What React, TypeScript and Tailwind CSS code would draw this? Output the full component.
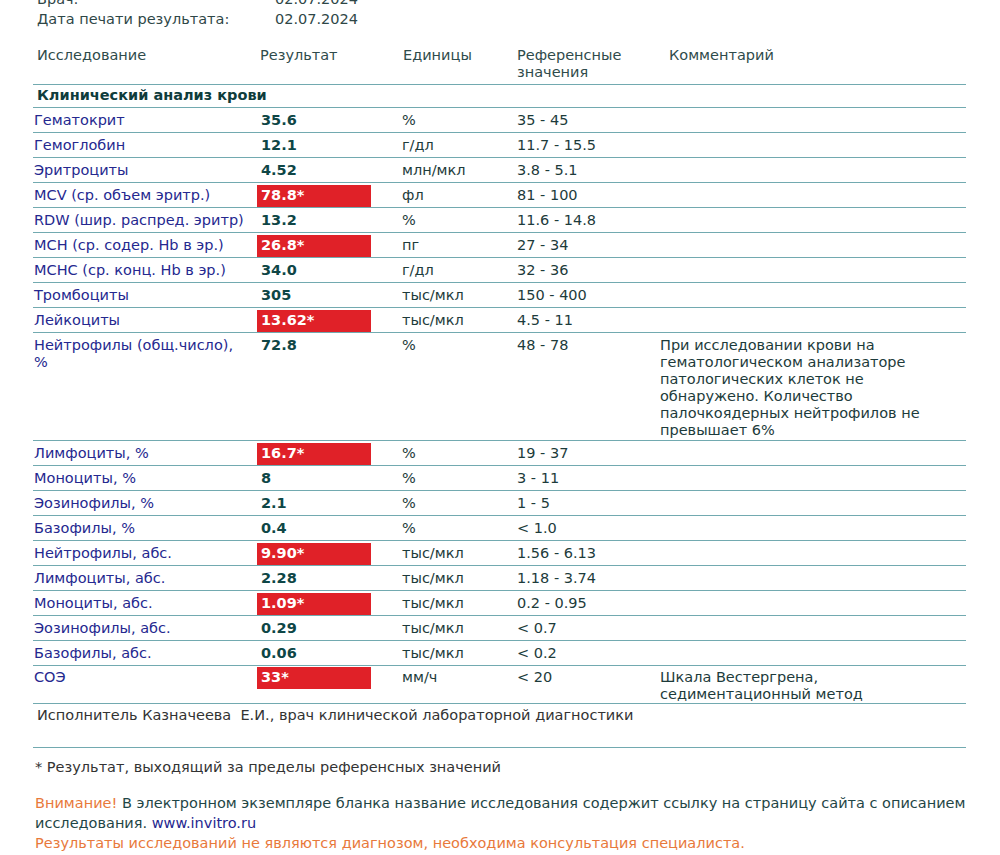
import React from 'react';

type Row = {
  name: string;
  value: string;
  bad?: boolean;
  unit: string;
  ref: string;
  comment?: string;
};

const rows: Row[] = [
  { name: 'Гематокрит', value: '35.6', unit: '%', ref: '35 - 45' },
  { name: 'Гемоглобин', value: '12.1', unit: 'г/дл', ref: '11.7 - 15.5' },
  { name: 'Эритроциты', value: '4.52', unit: 'млн/мкл', ref: '3.8 - 5.1' },
  { name: 'MCV (ср. объем эритр.)', value: '78.8*', bad: true, unit: 'фл', ref: '81 - 100' },
  { name: 'RDW (шир. распред. эритр)', value: '13.2', unit: '%', ref: '11.6 - 14.8' },
  { name: 'MCH (ср. содер. Hb в эр.)', value: '26.8*', bad: true, unit: 'пг', ref: '27 - 34' },
  { name: 'MCHC (ср. конц. Hb в эр.)', value: '34.0', unit: 'г/дл', ref: '32 - 36' },
  { name: 'Тромбоциты', value: '305', unit: 'тыс/мкл', ref: '150 - 400' },
  { name: 'Лейкоциты', value: '13.62*', bad: true, unit: 'тыс/мкл', ref: '4.5 - 11' },
  {
    name: 'Нейтрофилы (общ.число), %',
    value: '72.8',
    unit: '%',
    ref: '48 - 78',
    comment:
      'При исследовании крови на гематологическом анализаторе патологических клеток не обнаружено. Количество палочкоядерных нейтрофилов не превышает 6%',
  },
  { name: 'Лимфоциты, %', value: '16.7*', bad: true, unit: '%', ref: '19 - 37' },
  { name: 'Моноциты, %', value: '8', unit: '%', ref: '3 - 11' },
  { name: 'Эозинофилы, %', value: '2.1', unit: '%', ref: '1 - 5' },
  { name: 'Базофилы, %', value: '0.4', unit: '%', ref: '< 1.0' },
  { name: 'Нейтрофилы, абс.', value: '9.90*', bad: true, unit: 'тыс/мкл', ref: '1.56 - 6.13' },
  { name: 'Лимфоциты, абс.', value: '2.28', unit: 'тыс/мкл', ref: '1.18 - 3.74' },
  { name: 'Моноциты, абс.', value: '1.09*', bad: true, unit: 'тыс/мкл', ref: '0.2 - 0.95' },
  { name: 'Эозинофилы, абс.', value: '0.29', unit: 'тыс/мкл', ref: '< 0.7' },
  { name: 'Базофилы, абс.', value: '0.06', unit: 'тыс/мкл', ref: '< 0.2' },
  {
    name: 'СОЭ',
    value: '33*',
    bad: true,
    unit: 'мм/ч',
    ref: '< 20',
    comment: 'Шкала Вестергрена, седиментационный метод',
  },
];

const grid = 'grid grid-cols-[224px_145px_115px_143px_306px]';

const ResultRow: React.FC<{ row: Row; last?: boolean }> = ({ row, last }) => {
  let pad = 'h-[25px] pt-[4px]';
  if (row.comment) pad = last ? 'pt-[3px]' : 'pt-[4px] pb-[1px]';
  return (
    <div className={`${grid} border-b border-[#72aab0] ${pad}`}>
      <div className="pl-[1px] pr-2 text-[#25288f]">{row.name}</div>
      <div>
        {row.bad ? (
          <div className="-mt-[2px] h-[22px] w-[114px] bg-[#e02128] pl-1 pt-[2px] font-bold text-white">
            {row.value}
          </div>
        ) : (
          <div className="pl-1 font-bold text-[#0e4646]">{row.value}</div>
        )}
      </div>
      <div className="text-[#1d3b3b]">{row.unit}</div>
      <div className="text-[#1d3b3b]">{row.ref}</div>
      <div className="pr-8 text-[#1d3b3b]">{row.comment}</div>
    </div>
  );
};

export default function App() {
  return (
    <div
      className="h-[855px] w-[1000px] overflow-hidden bg-white text-[14.5px] leading-[17px]"
      style={{ fontFamily: '"DejaVu Sans", Verdana, sans-serif' }}
    >
      {/* Шапка */}
      <div className="-mt-[11px] pl-[37px] leading-[20px] text-[#2f4747]">
        <div className="flex">
          <span className="w-[238px]">Врач:</span>
          <span>02.07.2024</span>
        </div>
        <div className="flex">
          <span className="w-[238px]">Дата печати результата:</span>
          <span>02.07.2024</span>
        </div>
      </div>

      <div className="ml-[33px] w-[933px]">
        {/* Заголовок таблицы */}
        <div className={`${grid} mt-[18px] border-b border-[#72aab0] pb-[3px] text-[#2f4b4b]`}>
          <div className="pl-1">Исследование</div>
          <div className="pl-[3px]">Результат</div>
          <div className="pl-[1px]">Единицы</div>
          <div>
            Референсные
            <br />
            значения
          </div>
          <div className="pl-[9px]">Комментарий</div>
        </div>

        <div className="border-b border-[#72aab0] pt-[2px] pb-[3px] pl-1 font-bold text-[#0f3c3c]">
          Клинический анализ крови
        </div>

        {rows.map((r, i) => (
          <ResultRow key={r.name} row={r} last={i === rows.length - 1} />
        ))}

        <div className="pt-[3px] pb-[23px] pl-1 text-[#333]">
          Исполнитель Казначеева&nbsp; Е.И., врач клинической лабораторной диагностики
        </div>
        <div className="border-b border-[#72aab0]" />
      </div>

      {/* Примечания */}
      <div className="pl-[35px] pr-6 leading-[20px]">
        <div className="mt-[9px] text-[#333]">* Результат, выходящий за пределы референсных значений</div>
        <div className="mt-[16px] text-[#1f4646]">
          <span className="text-[#e8793b]">Внимание!</span> В электронном экземпляре бланка название
          исследования содержит ссылку на страницу сайта с описанием исследования.{' '}
          <span className="text-[#25288f]">www.invitro.ru</span>
        </div>
        <div className="text-[#e8793b]">
          Результаты исследований не являются диагнозом, необходима консультация специалиста.
        </div>
      </div>
    </div>
  );
}
